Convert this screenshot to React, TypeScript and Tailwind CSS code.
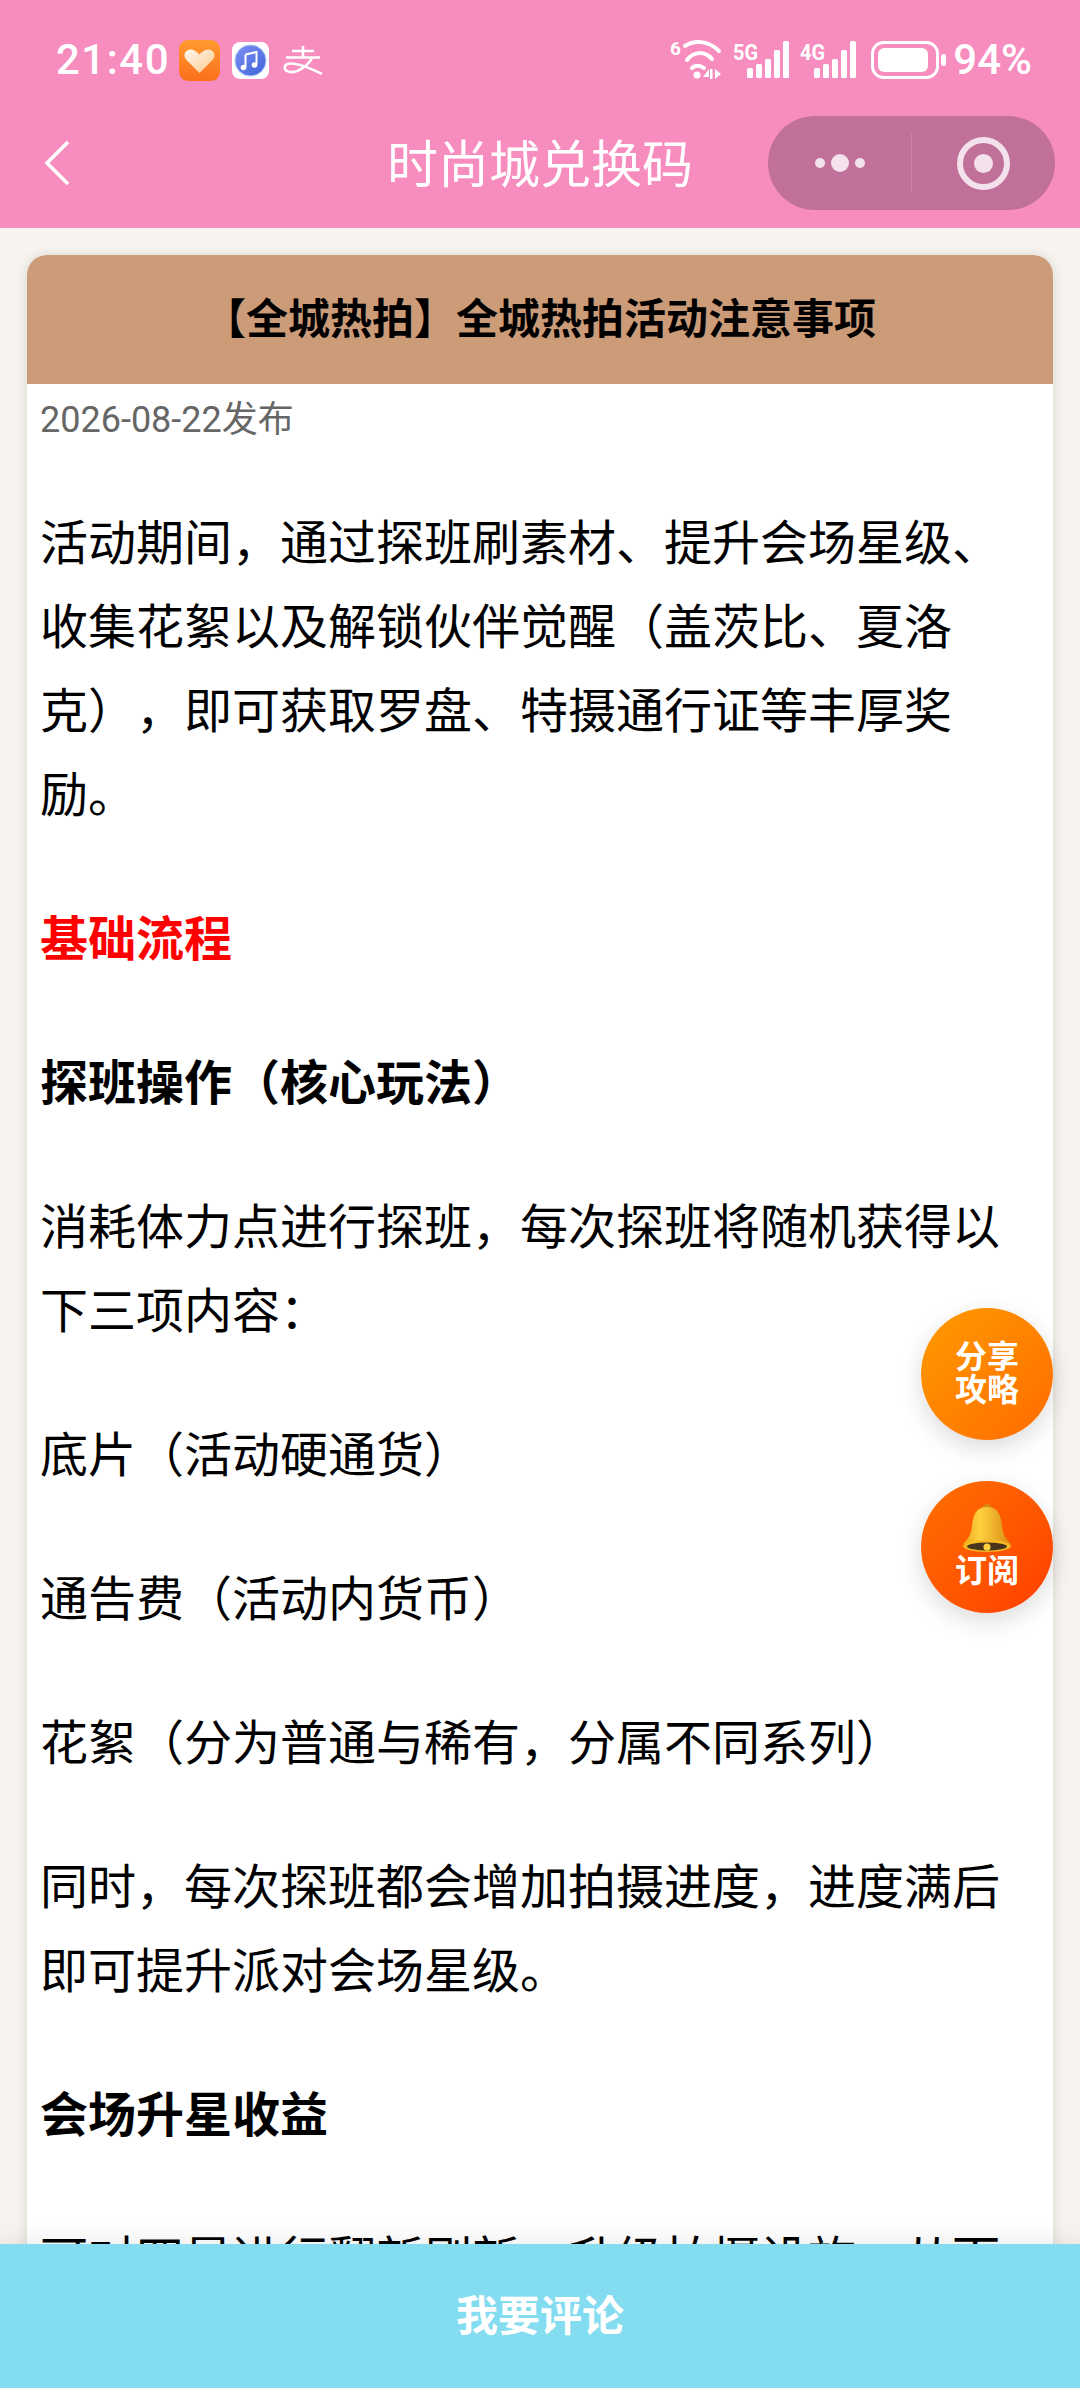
import type { ReactNode } from 'react'

const FONT = "font-['Roboto','Noto_Sans_CJK_SC',sans-serif]"

function HeartApp() {
  return (
    <svg width="41" height="41" viewBox="0 0 41 41" className="ml-[14px]">
      <defs>
        <linearGradient id="appBg" x1="0" y1="0" x2="0" y2="1">
          <stop offset="0" stopColor="#ff9a2e" />
          <stop offset="1" stopColor="#fb6f1c" />
        </linearGradient>
        <linearGradient id="heartFill" x1="0" y1="0" x2="1" y2="1">
          <stop offset="0" stopColor="#fff8ec" />
          <stop offset="1" stopColor="#fbc98e" />
        </linearGradient>
      </defs>
      <rect width="41" height="41" rx="9" fill="url(#appBg)" />
      <path d="M20.500 33 L7 19.500 C3.500 15 6.500 9.500 11.500 9.500 C15 9.500 18 11.500 20.500 14.500 C23 11.500 26 9.500 29.500 9.500 C34.500 9.500 37.500 15 34 19.500 Z" fill="url(#heartFill)" />
    </svg>
  )
}

function MusicApp() {
  return (
    <svg width="37" height="37" viewBox="0 0 37 37" className="ml-[12px]">
      <defs>
        <linearGradient id="discFill" x1="0" y1="0" x2="1" y2="1">
          <stop offset="0" stopColor="#7f8ff5" />
          <stop offset="1" stopColor="#3f62d8" />
        </linearGradient>
      </defs>
      <rect width="37" height="37" rx="8" fill="#fff" />
      <circle cx="18.500" cy="18.500" r="15.500" fill="url(#discFill)" stroke="#a8c8f5" strokeWidth="1" />
      <path d="M13.500 12.500 L24.500 10 V22.500 M13.500 12.500 V25" stroke="#fff" strokeWidth="2" fill="none" />
      <circle cx="11.500" cy="25.500" r="2.800" fill="#fff" />
      <circle cx="22.500" cy="23" r="2.800" fill="#fff" />
    </svg>
  )
}

function AlipayMark() {
  return (
    <svg width="40" height="30" viewBox="0 0 40 30" fill="none" stroke="#fff" strokeWidth="2.600" className="ml-[14px]">
      <path d="M9 6 H31 M20 1 V12 M3 12.500 H37" />
      <path d="M29 13 C25 21 14 28 7 27 C0 26 0 19 7 18.500 C15 18 27 23 39 29" />
    </svg>
  )
}

function WifiIcon() {
  return (
    <svg width="52" height="42" viewBox="0 0 52 42" fill="none" stroke="#fff" strokeLinecap="round" strokeWidth="4" className="overflow-visible">
      <text x="0" y="16" fill="#fff" stroke="none" fontSize="19" fontWeight="700" fontFamily="Roboto">6</text>
      <path d="M15 7 C24 1 38 1 49 12" />
      <path d="M17 21 C24 12 35 12 42 20" />
      <path d="M22 29 C25 26 30 26 34 29" />
      <circle cx="27" cy="36" r="3.500" fill="#fff" stroke="none" />
      <path d="M39 30 L33 38 H39 Z M42 39 V30 M45 30 L51 35 L45 40 Z" fill="#fff" stroke="none" />
      <rect x="40" y="30" width="2.500" height="10" fill="#fff" stroke="none" />
    </svg>
  )
}

function SignalIcon({ label }: { label: string }) {
  return (
    <svg width="56" height="40" viewBox="0 0 56 40" fill="#fff" className="ml-[11px] overflow-visible">
      <text x="0" y="20" fontSize="22" fontWeight="700" fontFamily="Roboto" textLength="25" lengthAdjust="spacingAndGlyphs">{label}</text>
      <rect x="14" y="28" width="6" height="10" rx="1.500" />
      <rect x="23" y="24" width="6" height="14" rx="1.500" />
      <rect x="32" y="19" width="6" height="19" rx="1.500" />
      <rect x="41" y="10" width="6" height="28" rx="1.500" />
      <rect x="50" y="1" width="6" height="37" rx="1.500" />
    </svg>
  )
}

function BatteryIcon() {
  return (
    <svg width="76" height="38" viewBox="0 0 76 38" className="ml-[15px]">
      <rect x="1.500" y="1.500" width="65" height="35" rx="11" fill="none" stroke="#fff" strokeWidth="3" />
      <rect x="7" y="7" width="50" height="24" rx="6" fill="#fff" />
      <rect x="70" y="13" width="5" height="12" rx="2.500" fill="#fff" />
    </svg>
  )
}

function BellIcon() {
  return (
    <svg width="50" height="50" viewBox="0 0 50 50" className="block">
      <defs>
        <linearGradient id="bellFill" x1="0" y1="0" x2="1" y2="0">
          <stop offset="0" stopColor="#e9a21c" />
          <stop offset="0.35" stopColor="#ffd23f" />
          <stop offset="1" stopColor="#d98a12" />
        </linearGradient>
      </defs>
      <circle cx="25" cy="4.500" r="4.500" fill="#d98a12" />
      <path d="M25 3 C14 3 11 11 10 22 C9 31 6 35 1 40 H49 C44 35 41 31 40 22 C39 11 36 3 25 3 Z" fill="url(#bellFill)" />
      <ellipse cx="25" cy="42" rx="24" ry="6" fill="#f5bb24" />
      <ellipse cx="25" cy="42.500" rx="20" ry="4" fill="#4a3420" />
      <circle cx="25" cy="43" r="3.500" fill="#ffd23f" />
    </svg>
  )
}

function Para({ children, className = '' }: { children: ReactNode; className?: string }) {
  return <p className={`mb-[60px] ${className}`}>{children}</p>
}

export default function App() {
  return (
    <div className={`relative h-[2388px] w-[1080px] overflow-hidden bg-[#f7f3ee] [text-spacing-trim:space-all] ${FONT}`}>
      {/* 状态栏 + 标题栏 */}
      <header className="h-[228px] bg-[#f78dbe] text-white">
        <div className="flex h-[116px] items-center pl-[56px] pr-[48px] pt-[4px]">
          <span className="w-[109px] text-[42px] font-medium leading-none tracking-[1.5px]">21:40</span>
          <HeartApp />
          <MusicApp />
          <AlipayMark />
          <div className="ml-auto flex items-center">
            <WifiIcon />
            <SignalIcon label="5G" />
            <SignalIcon label="4G" />
            <BatteryIcon />
            <span className="ml-[6px] text-[42px] font-medium leading-none">94%</span>
          </div>
        </div>
        <div className="relative flex h-[94px] items-center justify-center">
          <svg width="26" height="46" viewBox="0 0 26 46" fill="none" stroke="#fff" strokeWidth="3.500" className="absolute left-[44px] top-[24px]">
            <path d="M24 2 L3 23 L24 44" />
          </svg>
          <h1 className="mt-[4px] text-[51px] font-normal leading-none">时尚城兑换码</h1>
          <div className="absolute left-[768px] top-0 flex h-[94px] w-[287px] items-center rounded-full bg-[#c1709a]">
            <div className="flex h-[58px] w-[144px] items-center justify-center gap-[6px] border-r border-[#d183ab] pl-[1px]">
              <span className="h-[10px] w-[10px] rounded-full bg-[#f3e2ec]" />
              <span className="h-[18px] w-[18px] rounded-full bg-[#f3e2ec]" />
              <span className="h-[10px] w-[10px] rounded-full bg-[#f3e2ec]" />
            </div>
            <div className="flex flex-1 items-center justify-center">
              <div className="flex h-[53px] w-[53px] items-center justify-center rounded-full border-[6px] border-[#f3e2ec]">
                <span className="h-[19px] w-[19px] rounded-full bg-[#f3e2ec]" />
              </div>
            </div>
          </div>
        </div>
      </header>

      {/* 攻略卡片 */}
      <main className="mx-[27px] mt-[27px] overflow-hidden rounded-t-[20px] bg-white shadow-[0_0_12px_rgba(0,0,0,0.12)]">
        <div className="flex h-[129px] items-center justify-center bg-[#cc9b78] text-[42px] font-bold text-black">
          【全城热拍】全城热拍活动注意事项
        </div>
        <div className="px-[13px]">
          <div className="mb-[55px] pt-[9px] text-[36px] leading-[54px] text-[#666]">2026-08-22发布</div>
          <div className="text-[48px] leading-[84px] text-black">
            <Para>活动期间，通过探班刷素材、提升会场星级、收集花絮以及解锁伙伴觉醒（盖茨比、夏洛克），即可获取罗盘、特摄通行证等丰厚奖励。</Para>
            <Para className="font-bold text-[#ff0000]">基础流程</Para>
            <Para className="font-bold">探班操作（核心玩法）</Para>
            <Para>消耗体力点进行探班，每次探班将随机获得以下三项内容：</Para>
            <Para>底片（活动硬通货）</Para>
            <Para>通告费（活动内货币）</Para>
            <Para>花絮（分为普通与稀有，分属不同系列）</Para>
            <Para>同时，每次探班都会增加拍摄进度，进度满后即可提升派对会场星级。</Para>
            <Para className="font-bold">会场升星收益</Para>
            <Para>可对四星进行翻新刷新，升级拍摄设施，从而</Para>
          </div>
        </div>
      </main>

      {/* 悬浮按钮 */}
      <button className="absolute left-[921px] top-[1308px] flex h-[132px] w-[132px] items-center justify-center rounded-full bg-gradient-to-br from-[#ff9a00] to-[#ff6a00] text-[32px] font-bold leading-[33px] text-white shadow-[0_8px_24px_rgba(0,0,0,0.14)]">
        分享<br />攻略
      </button>
      <button className="absolute left-[921px] top-[1481px] flex h-[132px] w-[132px] flex-col items-center justify-center rounded-full bg-gradient-to-br from-[#ff6f00] to-[#ff3c00] pb-[2px] text-[32px] font-bold leading-[34px] text-white shadow-[0_8px_24px_rgba(0,0,0,0.14)]">
        <BellIcon />
        订阅
      </button>

      {/* 底部评论栏 */}
      <div className="absolute inset-x-0 bottom-0 flex h-[144px] items-center justify-center bg-[#84dcf1] text-[42px] font-semibold text-white shadow-[0_-4px_20px_rgba(0,0,0,0.08)]">
        我要评论
      </div>
    </div>
  )
}
